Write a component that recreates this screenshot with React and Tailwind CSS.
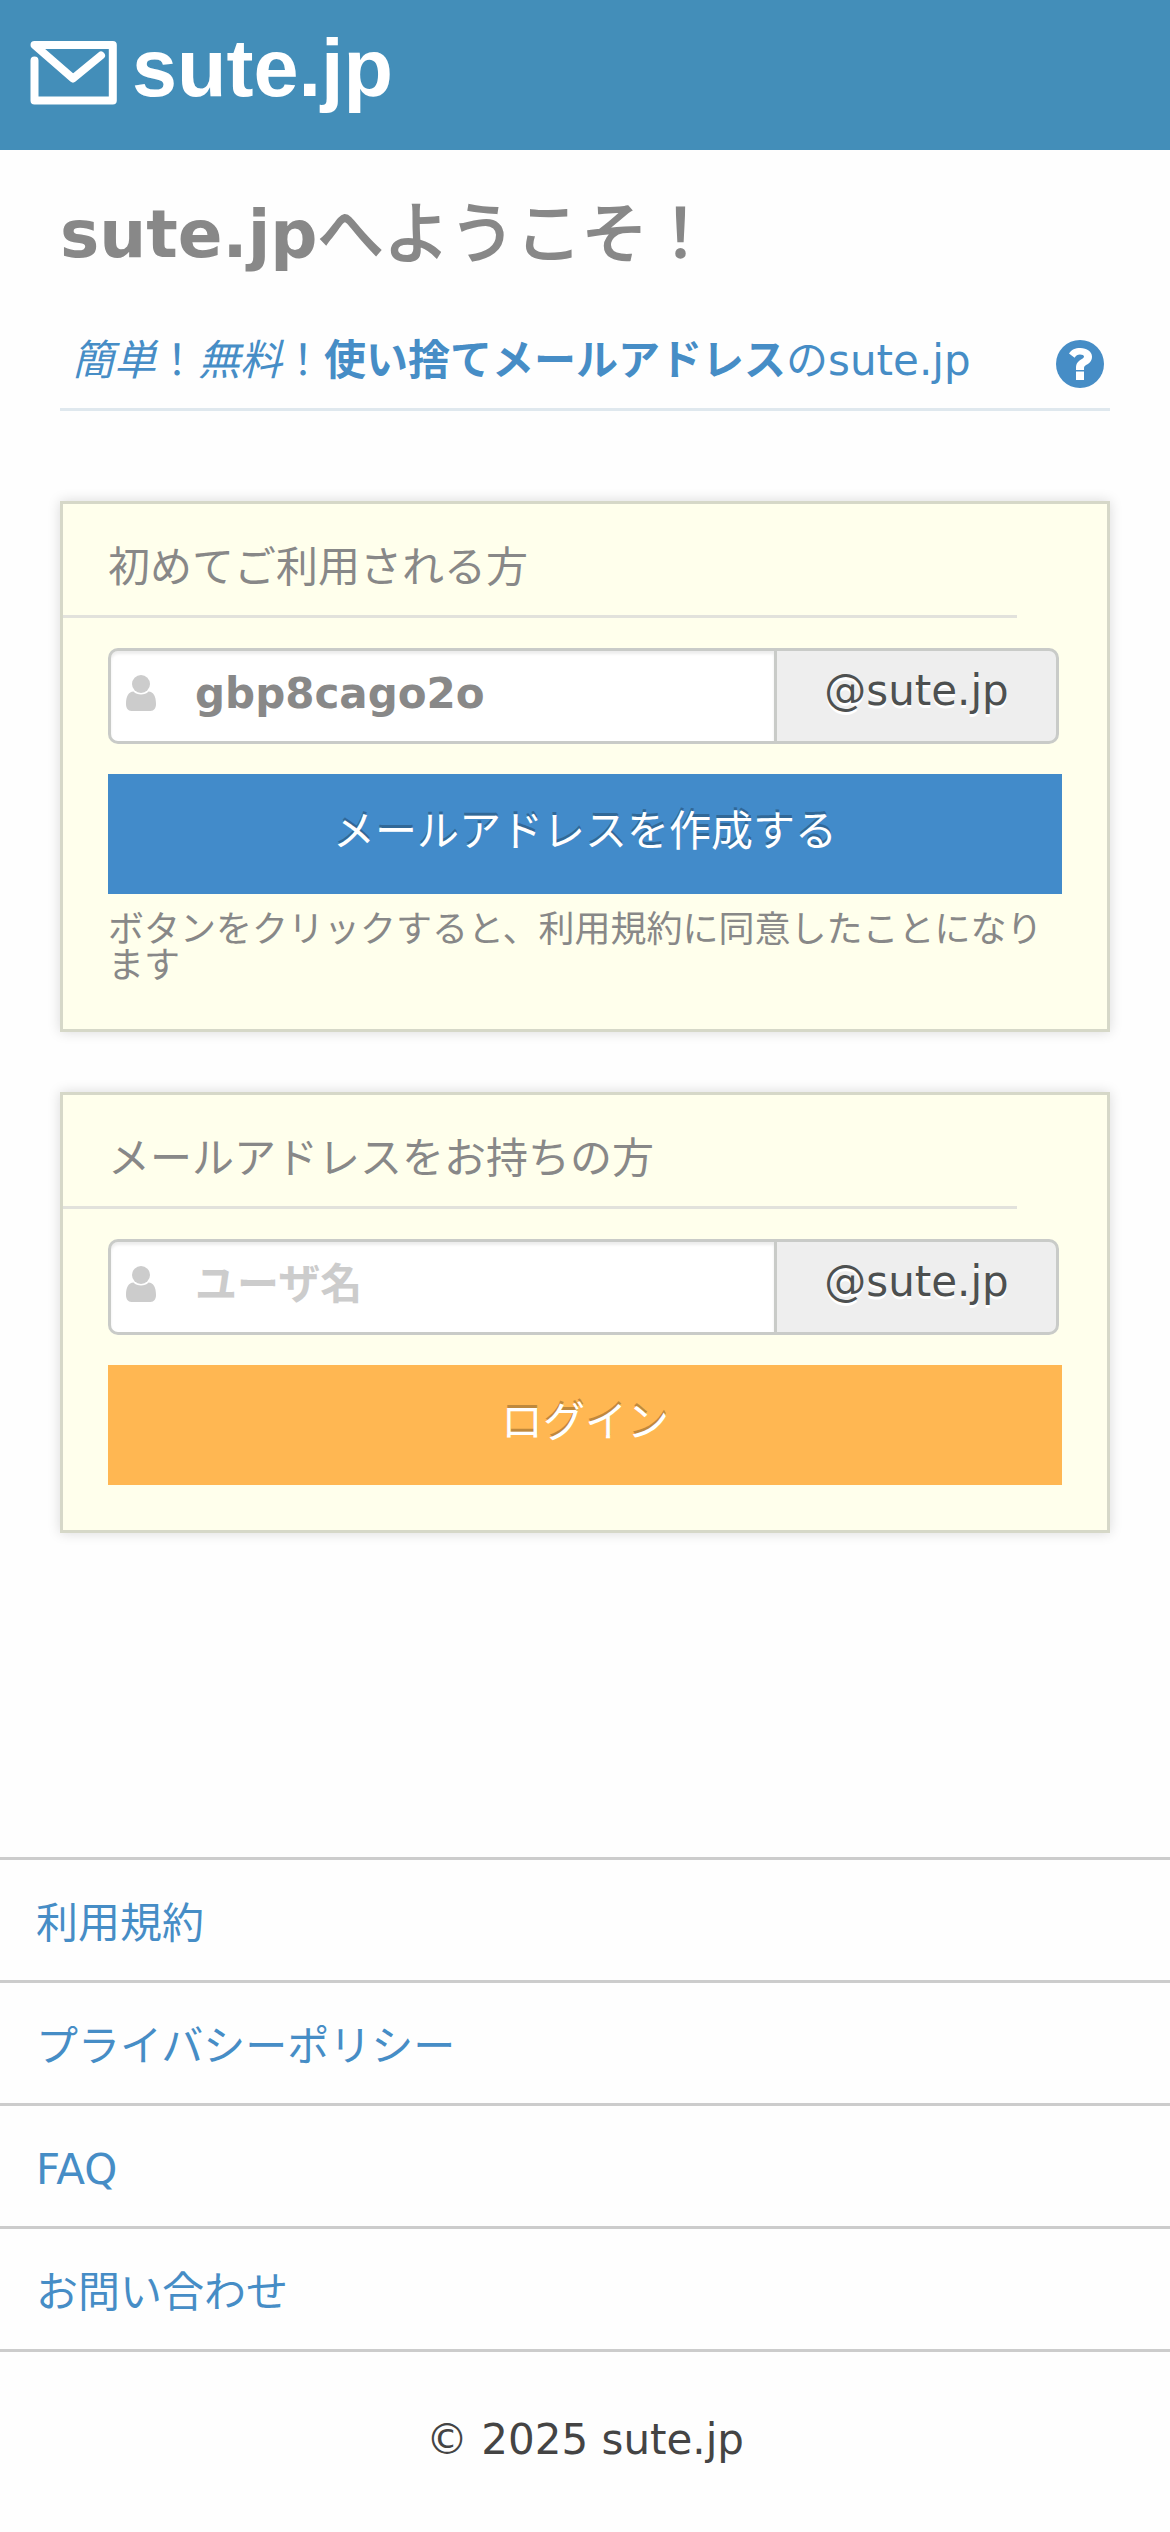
import { useState } from 'react';

const footerLinks = ['利用規約', 'プライバシーポリシー', 'FAQ', 'お問い合わせ'];

const LogoIcon = () => (
  <svg width="88" height="66" viewBox="0 0 88 66" fill="none" stroke="#fff" strokeWidth="8" strokeLinecap="round" strokeLinejoin="round">
    <path d="M4.500 20.500V60.500H82.800V5H4.500L43 38.500L71 15.500" />
  </svg>
);

const HelpIcon = () => (
  <svg width="48" height="48" viewBox="0 0 48 48">
    <circle cx="24" cy="24" r="24" fill="#468dc6" />
    <path fill="#fff" d="M20 31.500h8v8.500h-8zM20 30v-2c0-4.500 2-6.500 5-8.500 2-1.300 3-1.800 3-3 0-1.300-1.700-2-4-2-2.600 0-3.800 1.200-5.400 3.200l-5.600-4.200C15.600 9.700 19 8 24.300 8 31 8 36 11.500 36 16.700c0 4.300-2.600 6.400-5.500 8.100-1.700 1-2.500 1.900-2.500 3.200v2z" />
  </svg>
);

const UserIcon = () => (
  <svg width="30" height="36" viewBox="0 0 30 36" fill="#ccc">
    <ellipse cx="15" cy="9" rx="9" ry="9" />
    <path d="M7.500 16.500C9.500 18.700 12 19.500 15 19.500s5.500-.8 7.500-3C27.500 17 30 21 30 29c0 4-2 7-5.500 7h-19C2 36 0 33 0 29c0-8 2.500-12 7.500-12.500z" />
  </svg>
);

const Card = ({ title, children }) => (
  <section className="border-3 border-[#d6d8c8] bg-[#ffffec] shadow-[0_0_12px_rgba(0,0,0,0.15)] pb-[45px]">
    <h2 className="mr-[90px] h-[114px] border-b-3 border-[#e2e2dc] pl-[45px] pt-8 leading-[63px] text-[#888]">
      {title}
    </h2>
    <div className="px-[45px] pt-[30px]">{children}</div>
  </section>
);

const AddressField = ({ value, onChange, placeholder }) => (
  <div className="mr-[3px] flex h-24">
    <label className="flex flex-1 items-center rounded-l-[10px] border-3 border-r-0 border-[#c9cbc8] bg-white pb-[6px] pl-[15px] shadow-[inset_0_3px_3px_rgba(0,0,0,0.075)]">
      <UserIcon />
      <input
        type="text"
        value={value}
        onChange={onChange}
        placeholder={placeholder}
        className="ml-[39px] h-[63px] w-[560px] bg-transparent font-bold text-[#888] outline-none placeholder:text-[#ccc] placeholder:opacity-100"
      />
    </label>
    <span className="w-[285px] rounded-r-[10px] border-3 border-[#c9cbc8] bg-[#eee] pt-[13px] text-center leading-[54px] text-[#4d5050] [text-shadow:0_3px_0_#fff]">
      @sute.jp
    </span>
  </div>
);

const App = () => {
  const [newUser, setNewUser] = useState('gbp8cago2o');
  const [user, setUser] = useState('');

  return (
    <div
      lang="ja"
      className="h-[2532px] w-[1170px] overflow-hidden bg-[#fefefe] font-['DejaVu_Sans','Noto_Sans_CJK_JP',sans-serif] text-[42px] leading-[63px]"
    >
      <header className="flex h-[150px] gap-[14px] bg-[#438eb9] pl-[30px] pt-10">
        <LogoIcon />
        <span className="-mt-[18px] font-['Liberation_Sans',sans-serif] text-[81px] leading-[92px] font-bold text-white">sute.jp</span>
      </header>

      <main className="px-15">
        <h1 className="pt-[37px] text-[66px] leading-[96px] font-bold text-[#888]">
          sute.jp<span className="font-normal [-webkit-text-stroke:2px_#888]">へようこそ！</span>
        </h1>

        <div className="mt-8 flex h-24 items-start justify-between border-b-3 border-[#dfe8ee] pl-3 pr-[6px] text-[#468dc6]">
          <p className="pt-[14px]">
            <i>簡単</i>！<i>無料</i>！<b>使い捨てメールアドレス</b>のsute.jp
          </p>
          <a href="#help" className="pt-[25px]" aria-label="ヘルプ">
            <HelpIcon />
          </a>
        </div>

        <div className="mt-[90px] flex flex-col gap-15">
          <Card title="初めてご利用される方">
            <AddressField value={newUser} onChange={(e) => setNewUser(e.target.value)} />
            <button className="mt-[30px] block h-[120px] w-full bg-[#428bca] pb-[6px] text-white [text-shadow:0_-3px_0_rgba(0,0,0,0.25)]">
              メールアドレスを作成する
            </button>
            <p className="mt-[18px] text-[36px] leading-[36px] text-[#888]">
              ボタンをクリックすると、利用規約に同意したことになります
            </p>
          </Card>

          <Card title="メールアドレスをお持ちの方">
            <AddressField value={user} onChange={(e) => setUser(e.target.value)} placeholder="ユーザ名" />
            <button className="mt-[30px] block h-[120px] w-full bg-[#ffb752] pb-[6px] text-white [text-shadow:0_-3px_0_rgba(0,0,0,0.25)]">
              ログイン
            </button>
          </Card>
        </div>
      </main>

      <footer className="mt-[324px]">
        <ul className="border-t-3 border-[#ccc]">
          {footerLinks.map((label) => (
            <li key={label} className="h-[123px] border-b-3 border-[#ccc] pl-9 pt-8">
              <a href="#" className="block text-[#468dc6]">{label}</a>
            </li>
          ))}
        </ul>
        <p className="pt-14 text-center text-[#444]">© 2025 sute.jp</p>
      </footer>
    </div>
  );
};

export default App;
